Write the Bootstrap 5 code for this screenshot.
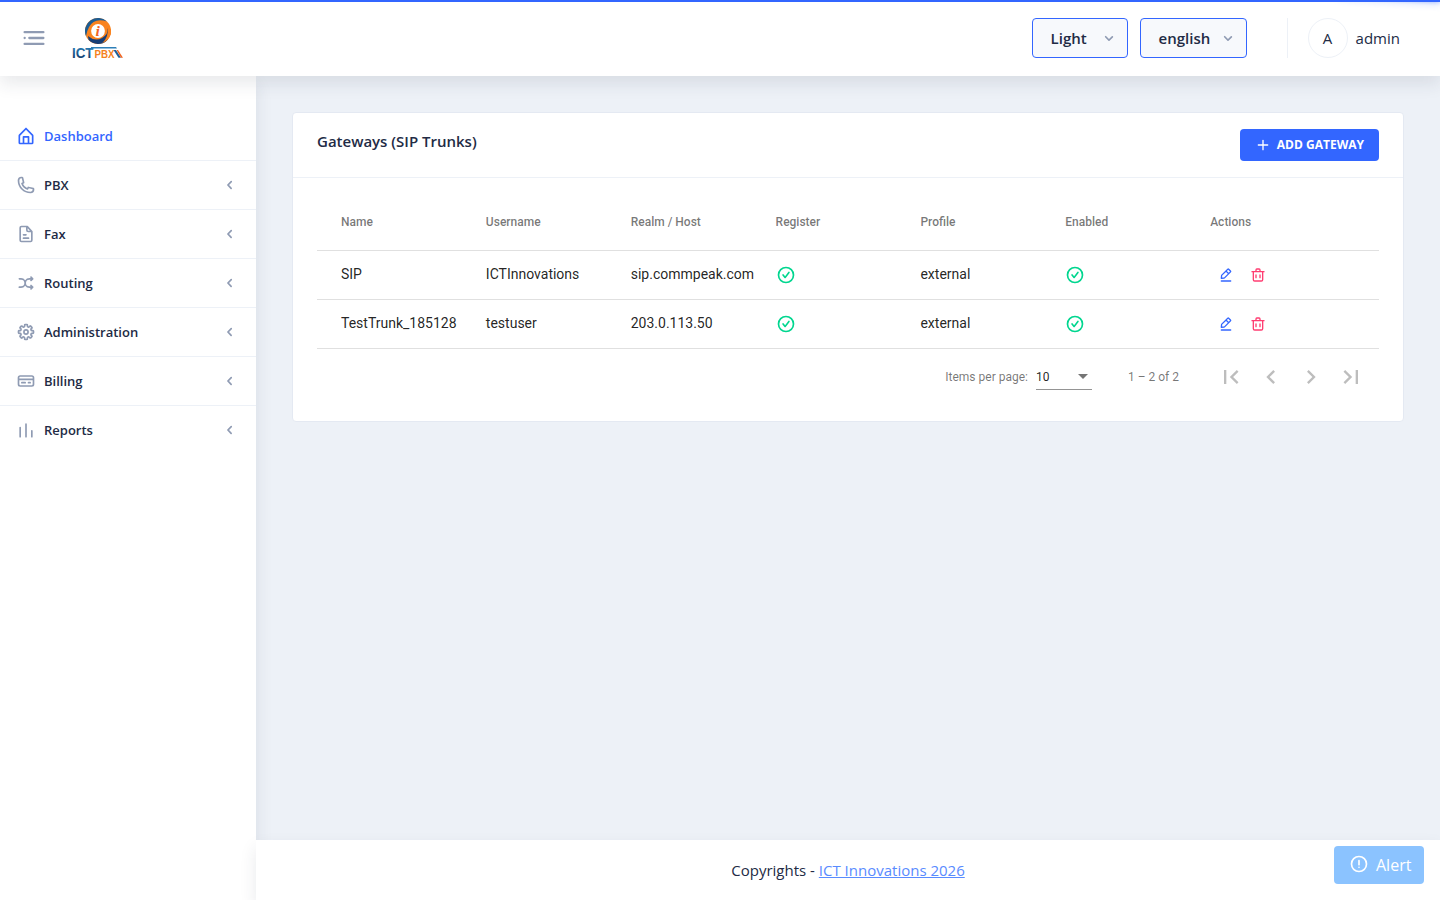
<!DOCTYPE html>
<html lang="en">

<head>
    <meta charset="UTF-8" />
    <meta name="viewport" content="width=device-width, initial-scale=1" />
    <title>ICTPBX</title>
    <link href="https://cdn.jsdelivr.net/npm/bootstrap@5.3.2/dist/css/bootstrap.min.css" rel="stylesheet" />
    <style>
        body {
            font-family: "Open Sans", sans-serif;
            font-size: 15px;
            line-height: 24px;
            color: #222b45;
            background: #edf1f7;
        }

        svg {
            fill: currentColor;
            flex-shrink: 0;
        }

        .ico-16 { width: 16px; height: 16px; }
        .ico-20 { width: 20px; height: 20px; }
        .ico-28 { width: 28px; height: 28px; }

        .hint { color: #8f9bb3; }

        /* loading bar */
        .pace-bar {
            height: 2px;
            background: #3366ff;
            z-index: 20;
        }

        .pace-peg {
            right: 0;
            top: 0;
            width: 100px;
            height: 2px;
            box-shadow: 0 0 10px #3366ff, 0 0 5px #3366ff;
            transform: rotate(3deg) translate(0, -4px);
        }

        .app-header {
            height: 76px;
            padding: 0 40px 0 20px;
            box-shadow: 0 8px 16px 0 rgba(44, 51, 73, .1);
            z-index: 10;
        }

        .brand-logo { width: 54px; height: 44px; margin-left: 23px; }

        .select-btn {
            height: 40px;
            padding: 0 8px 0 18px;
            border: 1px solid #3366ff;
            border-radius: 4px;
            background: #f7f9fc;
            color: #222b45;
            font-size: 15px;
            font-weight: 600;
        }

        .select-theme { width: 96px; margin-right: 12px; }
        .select-lang { width: 107px; }

        .user-block {
            height: 40px;
            margin-left: 40px;
            padding-left: 20px;
            border-left: 1px solid #edf1f7;
        }

        .avatar {
            width: 40px;
            height: 40px;
            border: 1px solid #edf1f7;
        }

        .sidebar {
            width: 256px;
            padding-top: 36px;
            box-shadow: 0 8px 16px 0 rgba(44, 51, 73, .1);
        }

        .menu-link {
            height: 49px;
            padding: 0 16px;
            border-bottom: 1px solid #edf1f7;
            color: #222b45;
            font-size: 13px;
            font-weight: 600;
        }

        .menu-link:last-child { border-bottom-color: transparent; }
        .menu-link.active, .menu-link.active .hint { color: #3366ff; }

        .page-area { padding: 36px 36px 0; }

        .panel {
            border: 1px solid #e4e9f2;
            border-radius: 4px;
        }

        .panel-head {
            padding: 16px 24px;
            border-bottom: 1px solid #edf1f7;
        }

        .panel-body { padding: 16px 24px; }

        .btn-add {
            height: 32px;
            padding: 0 15px;
            border: 0;
            border-radius: 4px;
            background: #3366ff;
            color: #fff;
            font-size: 12px;
            font-weight: 700;
            gap: 6px;
        }

        /* data table */
        .grid-table {
            font-family: Roboto, sans-serif;
            color: rgba(0, 0, 0, .87);
        }

        .grid-row {
            height: 49px;
            padding: 0 24px;
            border-bottom: 1px solid rgba(0, 0, 0, .12);
            font-size: 14px;
        }

        .grid-head {
            height: 57px;
            font-size: 12px;
            font-weight: 500;
            color: rgba(0, 0, 0, .54);
        }

        .cell-text { padding-bottom: 2px; }

        .ok { color: #00d68f; }
        .edit { color: #3366ff; margin-left: 8px; }
        .del { color: #ff3d71; margin-left: 16px; }

        .pager {
            height: 56px;
            padding-right: 8px;
            font-size: 12px;
            color: rgba(0, 0, 0, .54);
        }

        .page-size {
            width: 56px;
            height: 26px;
            margin: 0 36px 0 8px;
            padding-right: 4px;
            border-bottom: 1px solid rgba(0, 0, 0, .42);
        }

        .page-size span { color: rgba(0, 0, 0, .87); }
        .page-arrows { margin-left: 32px; color: rgba(0, 0, 0, .26); }
        .page-arrows svg { width: 28px; height: 28px; margin: 0 6px; }

        .app-footer {
            height: 60.5px;
            box-shadow: 0 8px 16px 0 rgba(44, 51, 73, .1);
        }

        .app-footer a { color: #598bff; }

        .alert-btn {
            right: 16px;
            bottom: 16px;
            width: 90px;
            height: 38px;
            padding-left: 15px;
            border-radius: 4px;
            background: #8bc3ff;
            color: #fff;
            font-size: 16px;
            gap: 7px;
            z-index: 5;
        }

        .alert-btn svg { margin-bottom: 2px; }
    </style>
    <script src="https://cdn.jsdelivr.net/npm/bootstrap@5.3.2/dist/js/bootstrap.bundle.min.js"></script>
</head>

<body class="vh-100 d-flex flex-column overflow-hidden">
    <svg class="d-none">
        <symbol id="i-menu" viewBox="0 0 24 24"><circle cx="4" cy="12" r="1" /><rect x="7" y="11" width="14" height="2" rx=".94" /><rect x="3" y="16" width="18" height="2" rx=".94" /><rect x="3" y="6" width="18" height="2" rx=".94" /></symbol>
        <symbol id="i-home" viewBox="0 0 24 24"><path d="M20.42 10.18L12.71 2.3a1 1 0 0 0-1.42 0l-7.71 7.89A2 2 0 0 0 3 11.62V20a2 2 0 0 0 1.89 2h14.22A2 2 0 0 0 21 20v-8.38a2.07 2.07 0 0 0-.58-1.44zM10 20v-6h4v6zm9 0h-3v-7a1 1 0 0 0-1-1H9a1 1 0 0 0-1 1v7H5v-8.42l7-7.15 7 7.19z" /></symbol>
        <symbol id="i-phone" viewBox="0 0 24 24"><path d="M17.4 22A15.42 15.42 0 0 1 2 6.6 4.6 4.6 0 0 1 6.6 2a3.94 3.94 0 0 1 .77.07 3.79 3.79 0 0 1 .72.18 1 1 0 0 1 .65.75l1.37 6a1 1 0 0 1-.26.92c-.13.14-.14.15-1.37.79a9.91 9.91 0 0 0 4.87 4.89c.65-1.24.66-1.25.8-1.38a1 1 0 0 1 .92-.26l6 1.37a1 1 0 0 1 .72.65 4.34 4.34 0 0 1 .19.73 4.77 4.77 0 0 1 .06.76A4.6 4.6 0 0 1 17.4 22zM6.6 4A2.61 2.61 0 0 0 4 6.6 13.41 13.41 0 0 0 17.4 20a2.61 2.61 0 0 0 2.6-2.6v-.33L15.36 16l-.29.55c-.45.87-.78 1.5-1.62 1.16a11.85 11.85 0 0 1-7.18-7.21c-.36-.78.32-1.14 1.18-1.59L8 8.64 6.93 4z" /></symbol>
        <symbol id="i-file" viewBox="0 0 24 24"><path d="M15 16H9a1 1 0 0 0 0 2h6a1 1 0 0 0 0-2zM9 14h3a1 1 0 0 0 0-2H9a1 1 0 0 0 0 2z" /><path d="M19.74 8.33l-5.44-6a1 1 0 0 0-.74-.33h-7A2.53 2.53 0 0 0 4 4.5v15A2.53 2.53 0 0 0 6.56 22h10.88A2.53 2.53 0 0 0 20 19.5V9a1 1 0 0 0-.26-.67zM14 5l2.74 3h-2a.79.79 0 0 1-.74-.85zm3.44 15H6.56a.53.53 0 0 1-.56-.5v-15a.53.53 0 0 1 .56-.5H12v3.15A2.79 2.79 0 0 0 14.71 10H18v9.5a.53.53 0 0 1-.56.5z" /></symbol>
        <symbol id="i-shuffle" viewBox="0 0 24 24"><path d="M18.71 14.29a1 1 0 0 0-1.42 1.42l.29.29H16a4 4 0 0 1 0-8h1.59l-.3.29a1 1 0 0 0 0 1.42A1 1 0 0 0 18 10a1 1 0 0 0 .71-.29l2-2A1 1 0 0 0 21 7a1 1 0 0 0-.29-.71l-2-2a1 1 0 0 0-1.42 1.42l.29.29H16a6 6 0 0 0-5 2.69A6 6 0 0 0 6 6H4a1 1 0 0 0 0 2h2a4 4 0 0 1 0 8H4a1 1 0 0 0 0 2h2a6 6 0 0 0 5-2.69A6 6 0 0 0 16 18h1.59l-.3.29a1 1 0 0 0 0 1.42A1 1 0 0 0 18 20a1 1 0 0 0 .71-.29l2-2A1 1 0 0 0 21 17a1 1 0 0 0-.29-.71z" /></symbol>
        <symbol id="i-gear" viewBox="0 0 24 24"><path d="M12.94 22h-1.89a1.68 1.68 0 0 1-1.68-1.68v-1.09a.34.34 0 0 0-.22-.29.38.38 0 0 0-.41 0l-.74.8a1.67 1.67 0 0 1-2.37 0L4.26 18.4a1.66 1.66 0 0 1-.5-1.19 1.72 1.72 0 0 1 .5-1.21l.74-.74a.34.34 0 0 0 0-.37c-.06-.15-.16-.26-.3-.26H3.68A1.69 1.69 0 0 1 2 12.94v-1.89a1.68 1.68 0 0 1 1.68-1.68h1.09a.34.34 0 0 0 .29-.22.38.38 0 0 0 0-.41L4.26 8a1.67 1.67 0 0 1 0-2.37L5.6 4.26a1.65 1.65 0 0 1 1.18-.5 1.72 1.72 0 0 1 1.22.5l.74.74a.34.34 0 0 0 .37 0c.15-.06.26-.16.26-.3V3.68A1.69 1.69 0 0 1 11.06 2H13a1.68 1.68 0 0 1 1.68 1.68v1.09a.34.34 0 0 0 .22.29.38.38 0 0 0 .41 0l.69-.8a1.67 1.67 0 0 1 2.37 0l1.37 1.34a1.67 1.67 0 0 1 .5 1.19 1.63 1.63 0 0 1-.5 1.18l-.74.74a.34.34 0 0 0 0 .37c.06.15.16.26.3.26h1.09A1.69 1.69 0 0 1 22 11.06V13a1.68 1.68 0 0 1-1.68 1.68h-1.09a.34.34 0 0 0-.29.22.34.34 0 0 0 0 .37l.77.77a1.67 1.67 0 0 1 0 2.37l-1.31 1.33a1.65 1.65 0 0 1-1.18.5 1.72 1.72 0 0 1-1.19-.5l-.77-.74a.34.34 0 0 0-.37 0c-.15.06-.26.16-.26.3v1.09A1.69 1.69 0 0 1 12.94 22zm-1.57-2h1.26v-.77a2.33 2.33 0 0 1 1.46-2.14 2.36 2.36 0 0 1 2.59.47l.54.54.88-.88-.54-.55a2.34 2.34 0 0 1-.48-2.56 2.33 2.33 0 0 1 2.14-1.45H20v-1.29h-.77a2.33 2.33 0 0 1-2.14-1.46 2.36 2.36 0 0 1 .47-2.59l.54-.54-.88-.88-.55.54a2.39 2.39 0 0 1-4-1.67V4h-1.3v.77a2.33 2.33 0 0 1-1.46 2.14 2.36 2.36 0 0 1-2.59-.47l-.54-.54-.88.88.54.55a2.39 2.39 0 0 1-1.67 4H4v1.26h.77a2.33 2.33 0 0 1 2.14 1.46 2.36 2.36 0 0 1-.47 2.59l-.54.54.88.88.55-.54a2.39 2.39 0 0 1 4 1.67z" /><path d="M12 15.5a3.5 3.5 0 1 1 3.5-3.5 3.5 3.5 0 0 1-3.5 3.5zm0-5a1.5 1.5 0 1 0 1.5 1.5 1.5 1.5 0 0 0-1.5-1.5z" /></symbol>
        <symbol id="i-card" viewBox="0 0 24 24"><path d="M19 5H5a3 3 0 0 0-3 3v8a3 3 0 0 0 3 3h14a3 3 0 0 0 3-3V8a3 3 0 0 0-3-3zM4 8a1 1 0 0 1 1-1h14a1 1 0 0 1 1 1v1H4zm16 8a1 1 0 0 1-1 1H5a1 1 0 0 1-1-1v-5h16z" /><path d="M7 15h4a1 1 0 0 0 0-2H7a1 1 0 0 0 0 2zM15 15h2a1 1 0 0 0 0-2h-2a1 1 0 0 0 0 2z" /></symbol>
        <symbol id="i-bars" viewBox="0 0 24 24"><path d="M12 4a1 1 0 0 0-1 1v15a1 1 0 0 0 2 0V5a1 1 0 0 0-1-1zM19 12a1 1 0 0 0-1 1v7a1 1 0 0 0 2 0v-7a1 1 0 0 0-1-1zM5 8a1 1 0 0 0-1 1v11a1 1 0 0 0 2 0V9a1 1 0 0 0-1-1z" /></symbol>
        <symbol id="i-left" viewBox="0 0 24 24"><path d="M13.36 17a1 1 0 0 1-.72-.31l-3.86-4a1 1 0 0 1 0-1.4l4-4a1 1 0 1 1 1.42 1.42L10.9 12l3.18 3.3a1 1 0 0 1 0 1.41 1 1 0 0 1-.72.29z" /></symbol>
        <symbol id="i-down" viewBox="0 0 24 24"><path d="M12 15.5a1 1 0 0 1-.71-.29l-4-4a1 1 0 1 1 1.42-1.42L12 13.1l3.3-3.18a1 1 0 1 1 1.38 1.44l-4 3.86a1 1 0 0 1-.68.28z" /></symbol>
        <symbol id="i-plus" viewBox="0 0 24 24"><path d="M19 11h-6V5a1 1 0 0 0-2 0v6H5a1 1 0 0 0 0 2h6v6a1 1 0 0 0 2 0v-6h6a1 1 0 0 0 0-2z" /></symbol>
        <symbol id="i-check" viewBox="0 0 24 24"><path d="M12 2a10 10 0 1 0 10 10A10 10 0 0 0 12 2zm0 18a8 8 0 1 1 8-8 8 8 0 0 1-8 8z" /><path d="M14.7 8.39l-3.78 5-1.63-2.11a1 1 0 0 0-1.58 1.23l2.43 3.11a1 1 0 0 0 .79.38 1 1 0 0 0 .79-.39l4.57-6a1 1 0 1 0-1.6-1.22z" /></symbol>
        <symbol id="i-edit" viewBox="0 0 24 24"><path d="M19 20H5a1 1 0 0 0 0 2h14a1 1 0 0 0 0-2z" /><path d="M5 18h.09l4.17-.38a2 2 0 0 0 1.21-.57l9-9a1.92 1.92 0 0 0-.07-2.71L16.66 2.6A2 2 0 0 0 14 2.53l-9 9a2 2 0 0 0-.57 1.21L4 16.91a1 1 0 0 0 .29.8A1 1 0 0 0 5 18zM15.27 4L18 6.73l-2 1.95L13.32 6zm-8.9 8.91L12 7.32l2.7 2.7-5.6 5.6-3 .28z" /></symbol>
        <symbol id="i-trash" viewBox="0 0 24 24"><path d="M21 6h-5V4.33A2.42 2.42 0 0 0 13.5 2h-3A2.42 2.42 0 0 0 8 4.33V6H3a1 1 0 0 0 0 2h1v11a3 3 0 0 0 3 3h10a3 3 0 0 0 3-3V8h1a1 1 0 0 0 0-2zM10 4.33c0-.16.21-.33.5-.33h3c.29 0 .5.17.5.33V6h-4zM18 19a1 1 0 0 1-1 1H7a1 1 0 0 1-1-1V8h12z" /><path d="M9 17a1 1 0 0 0 1-1v-4a1 1 0 0 0-2 0v4a1 1 0 0 0 1 1zM15 17a1 1 0 0 0 1-1v-4a1 1 0 0 0-2 0v4a1 1 0 0 0 1 1z" /></symbol>
        <symbol id="i-alert" viewBox="0 0 24 24"><path d="M12 2a10 10 0 1 0 10 10A10 10 0 0 0 12 2zm0 18a8 8 0 1 1 8-8 8 8 0 0 1-8 8z" /><circle cx="12" cy="16" r="1" /><path d="M12 7a1 1 0 0 0-1 1v5a1 1 0 0 0 2 0V8a1 1 0 0 0-1-1z" /></symbol>
    </svg>

    <div class="pace-bar position-fixed top-0 start-0 w-100">
        <div class="pace-peg position-absolute"></div>
    </div>

    <header class="app-header bg-white d-flex align-items-center flex-shrink-0 position-relative">
        <svg class="ico-28 hint"><use href="#i-menu" /></svg>
        <svg class="brand-logo" viewBox="0 0 54 44">
            <defs>
                <linearGradient id="lg-blue" x1="0" y1="0" x2="0" y2="1">
                    <stop offset="0" stop-color="#2d8fc9" />
                    <stop offset="1" stop-color="#12305f" />
                </linearGradient>
            </defs>
            <circle cx="27" cy="15" r="13" fill="#f9831f" />
            <!-- blue blades of the ring -->
            <path d="M15 20A13 13 0 0 1 36 5.600Q28 2.500 22.500 6T15 20z" fill="#1c5c93" />
            <path d="M14 15.500Q15 24 23 27.300A13 13 0 0 1 14 15.500z" fill="#3d9ad1" />
            <path d="M17 20Q24 26 31 22T36 12Q40 18 36 24.400A13 13 0 0 1 17.500 23.800z" fill="#173f77" />
            <path d="M40 13A13 13 0 0 1 31 27.300Q38 21 36.500 12z" fill="#f9831f" />
            <circle cx="27" cy="15" r="6.900" fill="#fff" />
            <text x="24.500" y="20.200" font-family="Liberation Serif" font-style="italic" font-weight="700" font-size="15.500" fill="#f2641f">i</text>
            <text x="1" y="41.700" font-family="Liberation Sans" font-weight="700" font-size="15.500" textLength="21.500" lengthAdjust="spacingAndGlyphs" fill="url(#lg-blue)">ICT</text>
            <path d="M20 31h25l1 1.600H20z" fill="#2d7fb8" />
            <text x="23.500" y="41.700" font-family="Liberation Sans" font-weight="700" font-size="10.800" textLength="20" lengthAdjust="spacingAndGlyphs" fill="#f58220">PBX</text>
            <path d="M42.500 34H45l5 7.700h-2.500z" fill="#1f5f97" />
            <path d="M45.500 34h1.500l5 7.700h-2z" fill="#f2641f" />
        </svg>

        <div class="d-flex align-items-center ms-auto">
            <button class="select-btn select-theme d-flex align-items-center justify-content-between" type="button">Light<svg class="ico-20 hint"><use href="#i-down" /></svg></button>
            <button class="select-btn select-lang d-flex align-items-center justify-content-between" type="button">english<svg class="ico-20 hint"><use href="#i-down" /></svg></button>
            <div class="user-block d-flex align-items-center gap-2">
                <div class="avatar rounded-circle d-flex align-items-center justify-content-center">A</div>
                <div>admin</div>
            </div>
        </div>
    </header>

    <div class="d-flex flex-grow-1">
        <nav class="sidebar bg-white flex-shrink-0" id="menu"></nav>

        <div class="d-flex flex-column flex-grow-1">
            <main class="page-area flex-grow-1">
                <div class="panel bg-white">
                    <div class="panel-head d-flex justify-content-between align-items-start">
                        <div class="fw-semibold">Gateways (SIP Trunks)</div>
                        <button class="btn-add d-flex align-items-center" type="button"><svg class="ico-16"><use href="#i-plus" /></svg>ADD GATEWAY</button>
                    </div>
                    <div class="panel-body">
                        <div class="grid-table" id="gateways">
                            <div class="grid-row grid-head d-flex align-items-center">
                                <div class="col">Name</div>
                                <div class="col">Username</div>
                                <div class="col">Realm / Host</div>
                                <div class="col">Register</div>
                                <div class="col">Profile</div>
                                <div class="col">Enabled</div>
                                <div class="col">Actions</div>
                            </div>
                        </div>
                        <div class="grid-table">
                            <div class="pager d-flex align-items-center justify-content-end">
                                <div>Items per page:</div>
                                <div class="page-size d-flex align-items-center justify-content-between">
                                    <span>10</span>
                                    <svg width="10" height="5" viewBox="0 0 10 5"><path d="M0 0l5 5 5-5z" /></svg>
                                </div>
                                <div>1 – 2 of 2</div>
                                <div class="page-arrows d-flex">
                                    <svg viewBox="0 0 24 24"><path d="M18.410 16.590L13.820 12l4.590-4.590L17 6l-6 6 6 6zM6 6h2v12H6z" /></svg>
                                    <svg viewBox="0 0 24 24"><path d="M15.410 7.410L14 6l-6 6 6 6 1.410-1.410L10.830 12z" /></svg>
                                    <svg viewBox="0 0 24 24"><path d="M10 6L8.590 7.410 13.170 12l-4.580 4.590L10 18l6-6z" /></svg>
                                    <svg viewBox="0 0 24 24"><path d="M5.590 7.410L10.180 12l-4.590 4.590L7 18l6-6-6-6zM16 6h2v12h-2z" /></svg>
                                </div>
                            </div>
                        </div>
                    </div>
                </div>
            </main>
            <footer class="app-footer bg-white d-flex align-items-center justify-content-center">
                <div>Copyrights - <a href="#">ICT Innovations 2026</a></div>
            </footer>
        </div>
    </div>

    <div class="alert-btn position-fixed d-flex align-items-center">
        <svg class="ico-20"><use href="#i-alert" /></svg>Alert
    </div>

    <script>
        const menu = [
            ['Dashboard', 'home'],
            ['PBX', 'phone'],
            ['Fax', 'file'],
            ['Routing', 'shuffle'],
            ['Administration', 'gear'],
            ['Billing', 'card'],
            ['Reports', 'bars']
        ];
        const gateways = [
            { name: 'SIP', username: 'ICTInnovations', realm: 'sip.commpeak.com', profile: 'external' },
            { name: 'TestTrunk_185128', username: 'testuser', realm: '203.0.113.50', profile: 'external' }
        ];
        const icon = (name, cls) => `<svg class="${cls}"><use href="#i-${name}" /></svg>`;

        document.getElementById('menu').innerHTML = menu.map(([label, ico], i) => `
<a href="#" class="menu-link d-flex align-items-center gap-2 text-decoration-none ${i === 0 ? 'active' : ''}">
${icon(ico, 'ico-20 hint')}<span class="flex-grow-1">${label}</span>${i === 0 ? '' : icon('left', 'ico-20 hint')}
</a>`).join('');

        gateways.forEach(g => {
            document.getElementById('gateways').innerHTML += `
<div class="grid-row d-flex align-items-center">
<div class="col cell-text">${g.name}</div>
<div class="col cell-text">${g.username}</div>
<div class="col cell-text">${g.realm}</div>
<div class="col d-flex">${icon('check', 'ico-20 ok')}</div>
<div class="col cell-text">${g.profile}</div>
<div class="col d-flex">${icon('check', 'ico-20 ok')}</div>
<div class="col d-flex">${icon('edit', 'ico-16 edit')}${icon('trash', 'ico-16 del')}</div>
</div>`;
        });
    </script>
</body>

</html>
